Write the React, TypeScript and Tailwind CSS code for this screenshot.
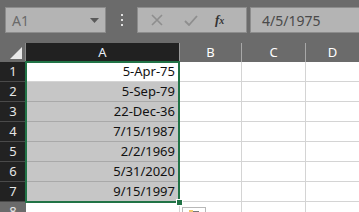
import React from 'react';

const rows = ['5-Apr-75', '5-Sep-79', '22-Dec-36', '7/15/1987', '2/2/1969', '5/31/2020', '9/15/1997', ''];

export default function App() {
  return (
    <div className="relative w-[359px] h-[212px] overflow-hidden bg-[#6b6b6b]" style={{ fontFamily: '"Noto Sans", "Open Sans", sans-serif' }}>
      {/* formula bar */}
      <div className="flex h-[43px] items-start pt-[7px]">
        <div className="ml-[5px] flex h-[26px] w-[101px] items-center justify-between border border-[#8c8c8c] bg-[#b4b4b4] pl-[6px] pr-[6px]">
          <span className="text-[14px] text-[#6a6a6a]">A1</span>
          <svg width="9" height="5" viewBox="0 0 9 5"><path d="M0 0 H9 L4.5 5 Z" fill="#5a5a5a" /></svg>
        </div>
        <div className="ml-[15px] mt-[7px] flex h-[12px] w-[3px] flex-col justify-between">
          <div className="h-[2px] w-[2px] bg-[#e0e0e0]" />
          <div className="h-[2px] w-[2px] bg-[#e0e0e0]" />
          <div className="h-[2px] w-[2px] bg-[#e0e0e0]" />
        </div>
        <div className="ml-[13px] flex h-[26px] w-[110px] items-center border border-[#8c8c8c] bg-[#b4b4b4]">
          <svg className="ml-[13px]" width="12" height="12" viewBox="0 0 12 12"><path d="M1 1 L11 11 M11 1 L1 11" stroke="#8e8e8e" strokeWidth="1.6" /></svg>
          <svg className="ml-[21px]" width="14" height="11" viewBox="0 0 14 11"><path d="M1 6 L5 10 L13 1" stroke="#8e8e8e" strokeWidth="1.8" fill="none" /></svg>
          <span className="ml-[17px] text-[13px] italic font-semibold text-[#333]" style={{ fontFamily: '"Liberation Serif", serif' }}>f<span className="text-[10px]">x</span></span>
        </div>
        <div className="ml-[3px] flex h-[26px] flex-1 items-center border border-r-0 border-[#8c8c8c] bg-[#b4b4b4] pl-[11px]">
          <span className="text-[14px] text-[#4a4a4a]">4/5/1975</span>
        </div>
      </div>

      {/* sheet */}
      <div className="grid grid-cols-[26px_154px_62px_64px_1fr] grid-rows-[19px_repeat(8,20px)] bg-white">
        <div className="relative bg-[#6b6b6b] border-r border-[#8a8a8a]">
          <svg className="absolute right-[3px] bottom-[3px]" width="12" height="12" viewBox="0 0 12 12"><path d="M12 0 V12 H0 Z" fill="#e8e8e8" /></svg>
        </div>
        <div className="flex items-center justify-center bg-[#212121] text-[13px] text-[#e8eef8] border-r border-[#9a9a9a]">A</div>
        <div className="flex items-center justify-center bg-[#6b6b6b] text-[13px] text-white border-r border-[#a8a8a8]">B</div>
        <div className="flex items-center justify-center bg-[#6b6b6b] text-[13px] text-white border-r border-[#a8a8a8]">C</div>
        <div className="flex items-center justify-center bg-[#6b6b6b] text-[13px] text-white">D</div>
        {rows.map((v, i) => {
          const sel = i < 7;
          return (
            <React.Fragment key={i}>
              <div className={`flex items-center justify-center text-[13px] border-b ${sel ? 'bg-[#222] text-[#e6e6e6] border-[#4a4a4a]' : 'bg-[#6b6b6b] text-[#e6e6e6] border-[#8a8a8a]'}`}>{i + 1}</div>
              <div className={`flex items-center justify-end pr-[4px] text-[13px] text-[#111] border-r border-b ${i === 0 ? 'bg-white border-[#d4d4d4]' : sel ? 'bg-[#c6c6c6] border-[#a9a9a9]' : 'bg-white border-[#d4d4d4]'}`}>{v}</div>
              <div className="border-r border-b border-[#d4d4d4]" />
              <div className="border-r border-b border-[#d4d4d4]" />
              <div className="border-b border-[#d4d4d4]" />
            </React.Fragment>
          );
        })}
      </div>

      {/* selection outline */}
      <div className="absolute left-[25px] top-[61px] h-[142px] w-[155px] border-2 border-[#217346]" />
      <div className="absolute left-[176px] top-[199px] h-[7px] w-[7px] border border-white bg-[#217346]" />

      {/* quick analysis */}
      <div className="absolute left-[182px] top-[207px] h-[10px] w-[24px] border border-[#b8b8b8] bg-white">
        <div className="absolute left-[6px] top-[2px] h-[4px] w-[4px] bg-[#f0c870]" />
        <div className="absolute left-[10px] top-[3px] h-[2px] w-[6px] bg-[#777]" />
      </div>
    </div>
  );
}
